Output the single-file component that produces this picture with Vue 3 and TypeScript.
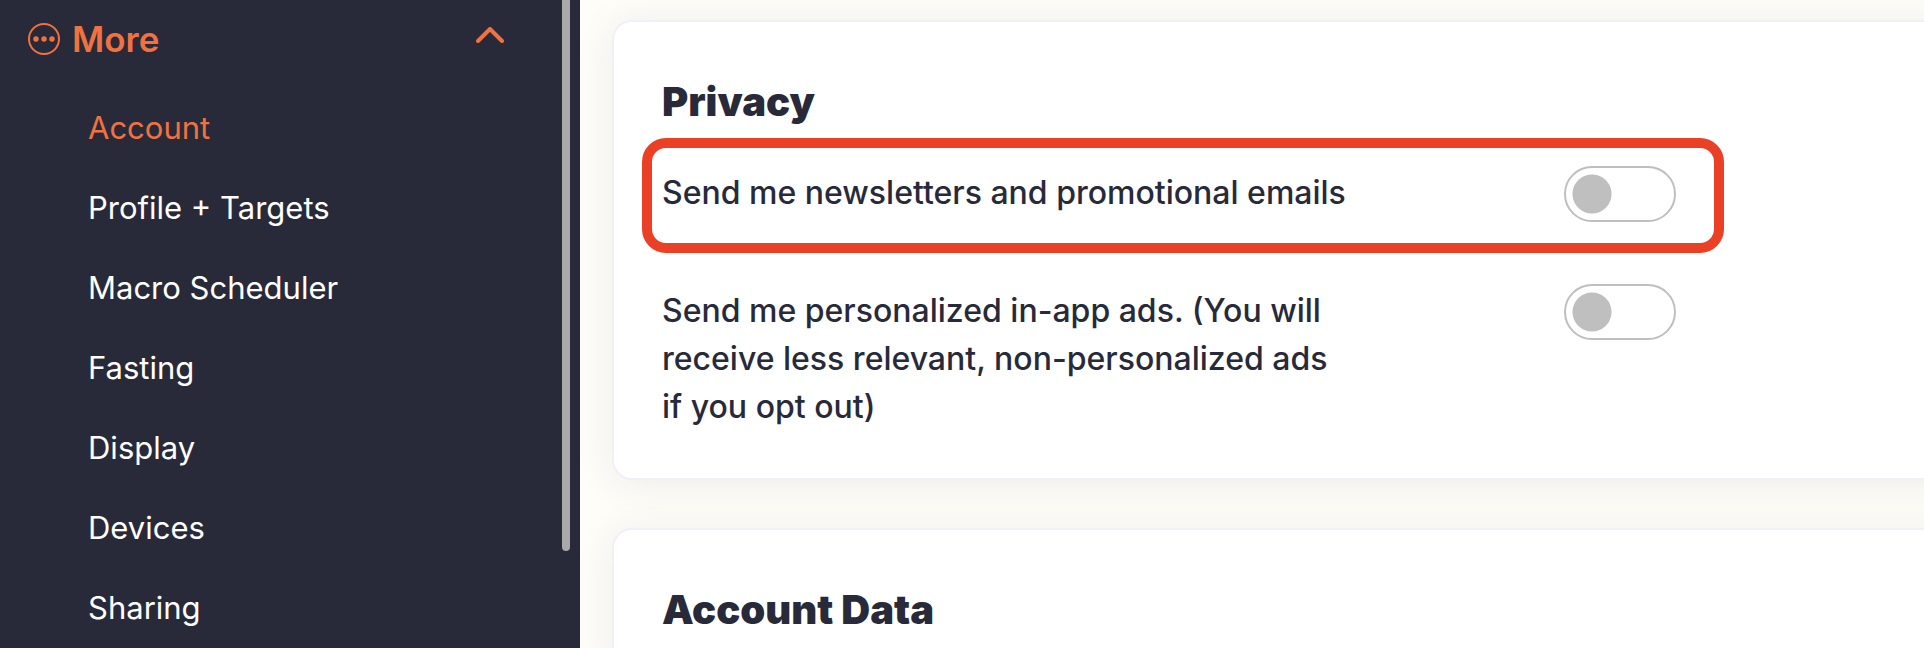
<script setup lang="ts">
import { ref } from 'vue'

const open = ref(true)
const links = ['Account', 'Profile + Targets', 'Macro Scheduler', 'Fasting', 'Display', 'Devices', 'Sharing']
const current = ref('Account')
const newsletters = ref(false)
const ads = ref(false)
</script>

<template>
  <div class="app">
    <aside class="sidebar">
      <nav class="nav">
        <button class="more" type="button" :aria-expanded="open" @click="open = !open">
          <svg class="dots" viewBox="0 0 32 32" aria-hidden="true">
            <circle cx="16" cy="16" r="15" fill="none" stroke="currentColor" stroke-width="2" />
            <circle cx="8" cy="16" r="2.7" fill="currentColor" />
            <circle cx="16" cy="16" r="2.7" fill="currentColor" />
            <circle cx="24" cy="16" r="2.7" fill="currentColor" />
          </svg>
          <span class="more-label">More</span>
          <svg class="chevron" viewBox="0 0 28 16" aria-hidden="true">
            <path d="M2 14 L14 2 L26 14" fill="none" stroke="currentColor" stroke-width="4" stroke-linecap="round" stroke-linejoin="round" />
          </svg>
        </button>
        <ul v-show="open" class="links">
          <li v-for="link in links" :key="link">
            <a href="#" :class="{ active: link === current }" @click.prevent="current = link">{{ link }}</a>
          </li>
        </ul>
      </nav>
      <div class="scrollbar" aria-hidden="true"></div>
    </aside>
    <main class="content">
      <section class="card">
        <h2>Privacy</h2>
        <div class="setting highlighted">
          <label for="newsletters">Send me newsletters and promotional emails</label>
          <input id="newsletters" v-model="newsletters" class="toggle" type="checkbox" role="switch" />
        </div>
        <div class="setting">
          <label for="ads">Send me personalized in-app ads. (You will receive less relevant, non-personalized ads if you opt out)</label>
          <input id="ads" v-model="ads" class="toggle" type="checkbox" role="switch" />
        </div>
      </section>
      <section class="card">
        <h2>Account Data</h2>
      </section>
    </main>
  </div>
</template>

<style>
body {
  margin: 0;
  overflow: hidden;
}
</style>

<style scoped>
.app {
  display: flex;
  height: 100vh;
  overflow: hidden;
  background: #fffdf8;
  color: #282a3a;
  font-family: Inter, "Liberation Sans", sans-serif;
  font-size: 32px;
  line-height: 48px;
}
.sidebar {
  display: flex;
  flex: none;
  width: 580px;
  box-sizing: border-box;
  padding-right: 10px;
  background: #292a39;
  z-index: 1;
}
.nav {
  flex: 1;
  padding: 15px 58px 0 28px;
}
.more {
  display: flex;
  align-items: center;
  gap: 12px;
  width: 100%;
  padding: 0;
  border: 0;
  background: none;
  color: #f07241;
  font: inherit;
  font-size: 35px;
  font-weight: 600;
  text-align: left;
}
.dots {
  width: 32px;
  height: 32px;
}
.more-label {
  flex: 1;
}
.chevron {
  width: 28px;
  height: 16px;
  margin-bottom: 8px;
}
.links {
  margin: 25px 0 0;
  padding: 0 0 0 60px;
  list-style: none;
  font-size: 31px;
}
.links a {
  display: block;
  padding: 16px 0;
  color: #fff;
  text-decoration: none;
}
.links a.active {
  color: #f07241;
}
.scrollbar {
  width: 8px;
  height: 85vh;
  border-radius: 0 0 4px 4px;
  background: #a9a9a9;
}
.content {
  display: flex;
  flex: 1;
  flex-direction: column;
  gap: 48px;
  min-width: 0;
  padding: 20px 0 0 32px;
}
.card {
  flex: none;
  box-sizing: border-box;
  margin-right: -60px;
  padding: 56px 48px 47px;
  border: 2px solid #eff0f9;
  border-radius: 20px;
  background: #fff;
  box-shadow: 0 4px 40px rgba(40, 42, 58, 0.08);
}
h2 {
  margin: 0;
  font-size: 40px;
  font-weight: 900;
  line-height: 48px;
}
.setting {
  display: flex;
  align-items: flex-start;
  gap: 214px;
  padding: 31px 0 0;
  font-weight: 500;
}
.setting label {
  width: 688px;
  padding-top: 3px;
}
.highlighted {
  width: 1042px;
  margin: 12px 0 0 -20px;
  padding: 18px 10px 21px;
  border: 10px solid #ea4025;
  border-radius: 24px;
}
.toggle {
  flex: none;
  width: 112px;
  height: 56px;
  box-sizing: border-box;
  margin: 0;
  border: 2px solid #bfbfbf;
  border-radius: 28px;
  appearance: none;
  background: #fff radial-gradient(circle at 26px 26px, #bfbfbf 19px, transparent 20px);
}
.toggle:checked {
  border-color: #f07241;
  background: #fff radial-gradient(circle at 82px 26px, #f07241 19px, transparent 20px);
}
</style>
